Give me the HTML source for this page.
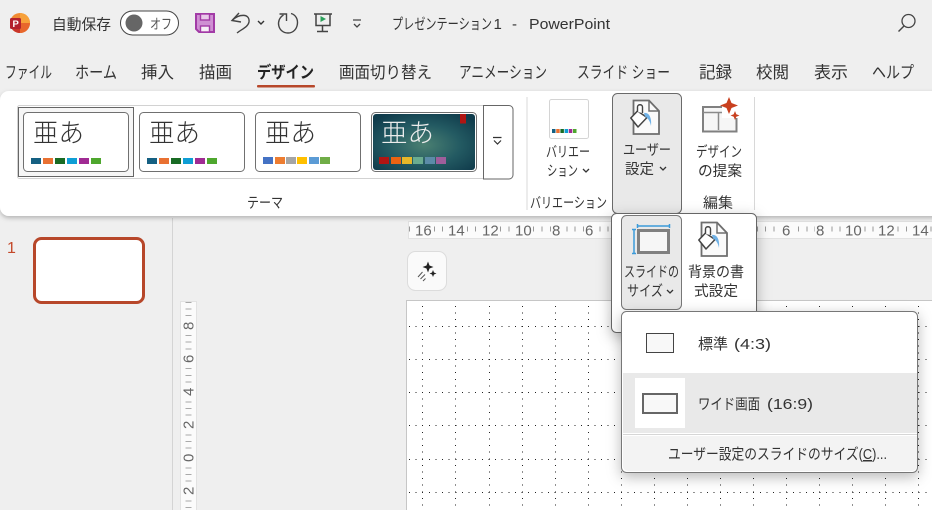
<!DOCTYPE html>
<html lang="ja"><head><meta charset="utf-8"><title>PowerPoint</title>
<style>
html,body{margin:0;padding:0;width:932px;height:510px;overflow:hidden;background:#efefef}
svg{display:block}
text{font-family:"Liberation Sans","Noto Sans CJK JP",sans-serif;font-size:15px;fill:#333;font-weight:400}
.r{font-family:"Liberation Sans",sans-serif;fill:#666;font-size:15px}
.k{font-size:26px;font-weight:200;fill:#333}
.t{font-size:16.5px}
.s{font-size:14.5px}
.d{shape-rendering:crispEdges;stroke:#222;stroke-width:1;stroke-dasharray:1 5.62;fill:none}
</style></head><body>
<svg width="932" height="510" viewBox="0 0 932 510" xmlns="http://www.w3.org/2000/svg">
<defs>
<filter id="s1" x="-5%" y="-10%" width="110%" height="130%"><feDropShadow dx="0" dy="2" stdDeviation="2.500" flood-color="#000" flood-opacity=".25"/></filter>
<filter id="s2" x="-15%" y="-15%" width="130%" height="140%"><feDropShadow dx="0" dy="4" stdDeviation="7" flood-color="#000" flood-opacity=".28"/></filter>
<radialGradient id="tg" cx=".5" cy=".55" r=".65"><stop offset="0" stop-color="#4b8072"/><stop offset=".55" stop-color="#235a62"/><stop offset="1" stop-color="#103c4c"/></radialGradient>
<g id="bucket">
<path d="M3.500 .5H19L29 11V34H3.500Z" fill="#fafafa" stroke="#6e6e6e" stroke-width="1.800"/>
<path d="M19 .5V11H29" fill="none" stroke="#6e6e6e" stroke-width="1.500"/>
<path d="M.8 18 7.500 11 17 17.500 8 27Z" fill="#fff" stroke="#444" stroke-width="1.500" stroke-linejoin="round"/>
<path d="M7.500 12V7C7.500 4 12.500 4 12.500 7V13" fill="#fff" stroke="#444" stroke-width="1.400"/>
<path d="M14 13C19 12 22 18 21 26 20 21 18 18 15 16.500Z" fill="#6fb1e6"/>
</g>
</defs>

<rect width="932" height="510" fill="#efefef"/>

<!-- title bar -->
<circle cx="20" cy="23" r="10" fill="#f08a33"/>
<path d="M20 13A10 10 0 0 1 30 23H20Z" fill="#f7a13a"/>
<path d="M20 23H30A10 10 0 0 1 20 33Z" fill="#e8672c"/>
<path d="M20 33A10 10 0 0 1 10 23H20Z" fill="#c9352a"/>
<rect x="10" y="18" width="11" height="11" rx="1.500" fill="#b3202c"/>
<text x="12.500" y="27" style="font-size:9.500px;font-weight:700;fill:#fff">P</text>
<text x="52" y="29.500" textLength="59" lengthAdjust="spacingAndGlyphs">自動保存</text>
<rect x="120.500" y="11" width="58" height="24" rx="12" fill="#fff" stroke="#444" stroke-width="1"/>
<circle cx="134" cy="23" r="8.500" fill="#666"/>
<text x="150" y="29" textLength="22" lengthAdjust="spacingAndGlyphs" style="font-size:14px;fill:#555">オフ</text>
<!-- save -->
<path d="M196 14H214V32H199L196 29Z" fill="#cf8fd3" stroke="#a23ba6" stroke-width="2"/>
<rect x="200.500" y="14" width="9" height="6" fill="#e9c9ea" stroke="#a23ba6" stroke-width="1.400"/>
<rect x="200.500" y="26" width="9" height="6" fill="#f7eef7" stroke="#a23ba6" stroke-width="1.400"/>
<!-- undo -->
<path d="M239 13 232 20.500 241 22" fill="none" stroke="#444" stroke-width="1.400"/>
<path d="M232.500 20C239 14 250 13 249 22 248 27 242 29 237 33" fill="none" stroke="#444" stroke-width="1.400"/>
<path d="M258 21 261 24 264 21" fill="none" stroke="#333" stroke-width="1.400"/>
<!-- redo -->
<path d="M283.500 15C275 20 278 33 288 33 299 33 301 16 291 13.500" fill="none" stroke="#444" stroke-width="1.400"/>
<path d="M279.500 14H286.500V21" fill="none" stroke="#444" stroke-width="1.400"/>
<!-- present -->
<path d="M314 14H332M316 14V25.500H330V14M322.500 25.500V31M317 31.500H328" fill="none" stroke="#444" stroke-width="1.500"/>
<path d="M320.500 16 326 19 320.500 22Z" fill="#2aa05a"/>
<!-- qat more -->
<path d="M353 20H361M354 24 357 27 360 24" fill="none" stroke="#444" stroke-width="1.300"/>
<text x="392" y="29" textLength="100" lengthAdjust="spacingAndGlyphs">プレゼンテーション</text>
<text x="493.500" y="29">1</text>
<text x="512" y="29">-</text>
<text x="529" y="29" textLength="81" lengthAdjust="spacingAndGlyphs">PowerPoint</text>
<!-- search -->
<circle cx="908.500" cy="21" r="6.500" fill="none" stroke="#444" stroke-width="1.300"/>
<path d="M904 26 898.500 31.500" stroke="#444" stroke-width="1.400"/>

<!-- tabs -->
<text class="t" x="5" y="78" textLength="47" lengthAdjust="spacingAndGlyphs">ファイル</text>
<text class="t" x="75" y="78" textLength="42" lengthAdjust="spacingAndGlyphs">ホーム</text>
<text class="t" x="141" y="78" textLength="33" lengthAdjust="spacingAndGlyphs">挿入</text>
<text class="t" x="199" y="78" textLength="33" lengthAdjust="spacingAndGlyphs">描画</text>
<text class="t" x="257" y="78" textLength="57" lengthAdjust="spacingAndGlyphs" style="font-weight:700;fill:#222">デザイン</text>
<text class="t" x="339" y="78" textLength="93" lengthAdjust="spacingAndGlyphs">画面切り替え</text>
<text class="t" x="459" y="78" textLength="88" lengthAdjust="spacingAndGlyphs">アニメーション</text>
<text class="t" x="577" y="78" textLength="93" lengthAdjust="spacingAndGlyphs">スライド ショー</text>
<text class="t" x="699" y="78" textLength="33" lengthAdjust="spacingAndGlyphs">記録</text>
<text class="t" x="756" y="78" textLength="33" lengthAdjust="spacingAndGlyphs">校閲</text>
<text class="t" x="814" y="78" textLength="34" lengthAdjust="spacingAndGlyphs">表示</text>
<text class="t" x="872" y="78" textLength="42" lengthAdjust="spacingAndGlyphs">ヘルプ</text>
<rect x="257" y="85" width="58" height="2.500" rx="1" fill="#b7472a"/>

<!-- thumbnail pane + divider -->
<rect x="172" y="218" width="1" height="292" fill="#d4d4d4"/>
<text x="7" y="253" style="font-size:16px;fill:#c4492a">1</text>
<rect x="34.500" y="238.500" width="109" height="64" rx="7" fill="#fff" stroke="#b7472a" stroke-width="3"/>

<!-- horizontal ruler -->
<rect x="408.500" y="221.500" width="530" height="17" fill="#fbfbfb" stroke="#e2e2e2" stroke-width="1"/>
<path d="M409 229H932" stroke="#999" stroke-width="5" stroke-dasharray="1 7.280" style="shape-rendering:crispEdges"/>
<g fill="#fbfbfb"><rect x="414" y="222" width="18" height="15"/><rect x="447" y="222" width="18" height="15"/><rect x="481" y="222" width="18" height="15"/><rect x="514" y="222" width="18" height="15"/><rect x="551" y="222" width="11" height="15"/><rect x="584" y="222" width="11" height="15"/><rect x="781" y="222" width="11" height="15"/><rect x="815" y="222" width="11" height="15"/><rect x="844" y="222" width="19" height="15"/><rect x="877" y="222" width="19" height="15"/><rect x="911" y="222" width="19" height="15"/></g>
<text class="r" x="415" y="235.500">16</text><text class="r" x="448" y="235.500">14</text><text class="r" x="482" y="235.500">12</text><text class="r" x="515" y="235.500">10</text><text class="r" x="552" y="235.500">8</text><text class="r" x="585" y="235.500">6</text>
<text class="r" x="782" y="235.500">6</text><text class="r" x="816" y="235.500">8</text><text class="r" x="845" y="235.500">10</text><text class="r" x="878" y="235.500">12</text><text class="r" x="912" y="235.500">14</text>

<!-- vertical ruler -->
<rect x="180.500" y="301.500" width="16" height="212" fill="#fbfbfb" stroke="#e2e2e2" stroke-width="1"/>
<path d="M188.500 302V510" stroke="#aaa" stroke-width="6" stroke-dasharray="1 5.620" style="shape-rendering:crispEdges"/>
<g fill="#fbfbfb"><rect x="182" y="319" width="13" height="14"/><rect x="182" y="352" width="13" height="14"/><rect x="182" y="385" width="13" height="14"/><rect x="182" y="418" width="13" height="14"/><rect x="182" y="451" width="13" height="14"/><rect x="182" y="484" width="13" height="14"/></g>
<text class="r" transform="translate(193.500 330) rotate(-90)">8</text>
<text class="r" transform="translate(193.500 363) rotate(-90)">6</text>
<text class="r" transform="translate(193.500 396) rotate(-90)">4</text>
<text class="r" transform="translate(193.500 429) rotate(-90)">2</text>
<text class="r" transform="translate(193.500 462) rotate(-90)">0</text>
<text class="r" transform="translate(193.500 495) rotate(-90)">2</text>

<!-- sparkle button -->
<rect x="407.500" y="251.500" width="39" height="39" rx="8" fill="#fafafa" stroke="#dcdcdc"/>
<path d="M428 261.500 429.500 265.500 433.500 267 429.500 268.500 428 272.500 426.500 268.500 422.500 267 426.500 265.500Z" fill="#222"/>
<path d="M433 270 434 272.500 436.500 273.500 434 274.500 433 277 432 274.500 429.500 273.500 432 272.500Z" fill="#222"/>
<path d="M418 277 422.500 272M420.500 279 425 274.500M423 281 425.500 278.500" stroke="#555" stroke-width="1" fill="none"/>

<!-- slide canvas -->
<rect x="406.500" y="300.500" width="530" height="215" fill="#fff" stroke="#c6c6c6"/>
<path class="d" d="M409 326.500H932M409 359.500H932M409 392.500H932M409 425.500H932M409 459.500H932M409 492.500H932"/>
<path class="d" d="M422.500 306V510M455.500 306V510M489.500 306V510M522.500 306V510M555.500 306V510M588.500 306V510M621.500 306V510M654.500 306V510M687.500 306V510M720.500 306V510M753.500 306V510M786.500 306V510M819.500 306V510M852.500 306V510M885.500 306V510M918.500 306V510"/>

<!-- ribbon -->
<rect x="0" y="91" width="945" height="125" rx="9" fill="#fff" filter="url(#s1)"/>

<!-- gallery -->
<rect x="17.500" y="105.500" width="490" height="73" rx="2" fill="#fff" stroke="#d2d2d2"/>
<rect x="18.500" y="107.500" width="115" height="69" fill="#f6f6f6" stroke="#666"/>
<rect x="23.500" y="112.500" width="105" height="59" rx="4" fill="#fff" stroke="#707070"/>
<rect x="139.500" y="112.500" width="105" height="59" rx="4" fill="#fff" stroke="#707070"/>
<rect x="255.500" y="112.500" width="105" height="59" rx="4" fill="#fff" stroke="#707070"/>
<rect x="371.500" y="112.500" width="105" height="59" rx="4" fill="#fff" stroke="#707070"/>
<rect x="373" y="114" width="102" height="56" rx="3" fill="url(#tg)"/>
<rect x="460" y="114" width="6" height="9.500" fill="#b01513"/>

<text class="k" x="33" y="142" textLength="51" lengthAdjust="spacingAndGlyphs">亜あ</text>
<text class="k" x="149" y="142" textLength="51" lengthAdjust="spacingAndGlyphs">亜あ</text>
<text class="k" x="265" y="142" textLength="51" lengthAdjust="spacingAndGlyphs">亜あ</text>
<text class="k" x="381" y="142" textLength="53" lengthAdjust="spacingAndGlyphs" style="fill:#ececec;font-weight:300">亜あ</text>

<rect x="31" y="158" width="10" height="6" fill="#156082"/><rect x="43" y="158" width="10" height="6" fill="#e97132"/><rect x="55" y="158" width="10" height="6" fill="#196b24"/><rect x="67" y="158" width="10" height="6" fill="#0f9ed5"/><rect x="79" y="158" width="10" height="6" fill="#a02b93"/><rect x="91" y="158" width="10" height="6" fill="#4ea72e"/>
<rect x="147" y="158" width="10" height="6" fill="#156082"/><rect x="159" y="158" width="10" height="6" fill="#e97132"/><rect x="171" y="158" width="10" height="6" fill="#196b24"/><rect x="183" y="158" width="10" height="6" fill="#0f9ed5"/><rect x="195" y="158" width="10" height="6" fill="#a02b93"/><rect x="207" y="158" width="10" height="6" fill="#4ea72e"/>
<rect x="263" y="157" width="10" height="7" fill="#4472c4"/><rect x="275" y="157" width="10" height="7" fill="#ed7d31"/><rect x="286" y="157" width="10" height="7" fill="#a5a5a5"/><rect x="297" y="157" width="10" height="7" fill="#ffc000"/><rect x="309" y="157" width="10" height="7" fill="#5b9bd5"/><rect x="320" y="157" width="10" height="7" fill="#70ad47"/>
<rect x="379" y="157" width="10" height="7" fill="#b01513"/><rect x="391" y="157" width="10" height="7" fill="#ea6312"/><rect x="402" y="157" width="10" height="7" fill="#e6b729"/><rect x="413" y="157" width="10" height="7" fill="#6aac90"/><rect x="425" y="157" width="10" height="7" fill="#5b8ba8"/><rect x="436" y="157" width="10" height="7" fill="#9e5e9b"/>

<!-- gallery expand -->
<path d="M483.500 105.500H509A4 4 0 0 1 513 109.500V175A4 4 0 0 1 509 179H483.500Z" fill="#fff" stroke="#666"/>
<path d="M493 137.500H501.500M494 140.500 497.500 144 501 140.500" fill="none" stroke="#333" stroke-width="1.200"/>
<text class="s" x="247" y="208" textLength="36" lengthAdjust="spacingAndGlyphs">テーマ</text>

<rect x="526.500" y="97" width="1" height="113" fill="#d8d8d8"/>

<!-- variations -->
<rect x="549.500" y="99.500" width="39" height="39" rx="2" fill="#fff" stroke="#d4d4d4"/>
<rect x="552" y="129" width="3.500" height="4" fill="#156082"/><rect x="556.200" y="129" width="3.500" height="4" fill="#e97132"/><rect x="560.400" y="129" width="3.500" height="4" fill="#196b24"/><rect x="564.600" y="129" width="3.500" height="4" fill="#0f9ed5"/><rect x="568.800" y="129" width="3.500" height="4" fill="#a02b93"/><rect x="573" y="129" width="3.500" height="4" fill="#4ea72e"/>
<text class="s" x="546" y="157" textLength="44" lengthAdjust="spacingAndGlyphs">バリエー</text>
<text class="s" x="547" y="176" textLength="31" lengthAdjust="spacingAndGlyphs">ション</text>
<path d="M583 169 586 172 589 169" fill="none" stroke="#333" stroke-width="1.300"/>
<text class="s" x="530" y="208" textLength="77" lengthAdjust="spacingAndGlyphs">バリエーション</text>

<!-- user setting -->
<rect x="612.500" y="93.500" width="69" height="120" rx="5" fill="#e9e9e9" stroke="#6a6a6a"/>
<use href="#bucket" x="630" y="100"/>
<text class="s" x="623" y="155" textLength="48" lengthAdjust="spacingAndGlyphs">ユーザー</text>
<text class="s" x="625" y="174" textLength="29" lengthAdjust="spacingAndGlyphs">設定</text>
<path d="M660 167 663 170 666 167" fill="none" stroke="#333" stroke-width="1.300"/>

<!-- design ideas -->
<rect x="703" y="107" width="33.500" height="24.500" fill="#f6f6f6" stroke="#808080" stroke-width="2"/>
<path d="M703 112.500H736M718.500 113V130" fill="none" stroke="#8a8a8a" stroke-width="1.500"/>
<rect x="722" y="100" width="18" height="18" fill="#fff"/>
<path d="M729 97 731.500 103 738 105.500 731.500 108 729 114 726.500 108 720 105.500 726.500 103Z" fill="#c9401f"/>
<path d="M735 111 736.300 114.200 739.500 115.500 736.300 116.800 735 120 733.700 116.800 730.500 115.500 733.700 114.200Z" fill="#c9401f"/>
<text class="s" x="696" y="157" textLength="46" lengthAdjust="spacingAndGlyphs">デザイン</text>
<text class="s" x="698" y="176" textLength="44" lengthAdjust="spacingAndGlyphs">の提案</text>
<text class="s" x="703" y="208" textLength="30" lengthAdjust="spacingAndGlyphs">編集</text>
<rect x="754" y="97" width="1" height="113" fill="#d8d8d8"/>

<!-- popup -->
<rect x="611.500" y="213.500" width="145" height="119" rx="5" fill="#fff" stroke="#666" filter="url(#s2)"/>
<rect x="621.500" y="215.500" width="60" height="94" rx="5" fill="#e9e9e9" stroke="#777"/>
<path d="M637.500 226H669.500M637.500 224V228M669.500 224V228" fill="none" stroke="#3b9ad9" stroke-width="1.500"/>
<path d="M634 229.500V253.500M632 229.500H636M632 253.500H636" fill="none" stroke="#3b9ad9" stroke-width="1.500"/>
<rect x="638.500" y="230.500" width="30" height="22" fill="#f6f6f6" stroke="#808080" stroke-width="3"/>
<text class="s" x="624" y="277" textLength="55" lengthAdjust="spacingAndGlyphs">スライドの</text>
<text class="s" x="627" y="296" textLength="36" lengthAdjust="spacingAndGlyphs">サイズ</text>
<path d="M667 290 670 293 673 290" fill="none" stroke="#333" stroke-width="1.300"/>
<use href="#bucket" x="698" y="222"/>
<text class="s" x="688" y="277" textLength="56" lengthAdjust="spacingAndGlyphs">背景の書</text>
<text class="s" x="694" y="296" textLength="44" lengthAdjust="spacingAndGlyphs">式設定</text>

<!-- dropdown -->
<rect x="621.500" y="311.500" width="296" height="161" rx="5" fill="#fff" stroke="#777" filter="url(#s2)"/>
<rect x="646.500" y="333.500" width="27" height="19" fill="#f8f8f8" stroke="#444"/>
<text x="698" y="349" textLength="30" lengthAdjust="spacingAndGlyphs">標準</text>
<text x="734" y="349" textLength="37" lengthAdjust="spacingAndGlyphs">(4:3)</text>
<rect x="623" y="373" width="294" height="60" fill="#e9e9e9"/>
<rect x="635" y="378" width="50" height="50" fill="#fff"/>
<rect x="643" y="394" width="34" height="19" fill="#f8f8f8" stroke="#666" stroke-width="2"/>
<text x="698" y="409" textLength="62" lengthAdjust="spacingAndGlyphs">ワイド画面</text>
<text x="767" y="409" textLength="46" lengthAdjust="spacingAndGlyphs">(16:9)</text>
<rect x="623" y="434" width="294" height="1" fill="#d6d6d6"/>
<path d="M623 436H917V466A5 5 0 0 1 912 471H628A5 5 0 0 1 623 466Z" fill="#f3f3f3"/>
<text x="668" y="459" textLength="219" lengthAdjust="spacingAndGlyphs">ユーザー設定のスライドのサイズ(<tspan text-decoration="underline">C</tspan>)...</text>
</svg>
</body></html>
